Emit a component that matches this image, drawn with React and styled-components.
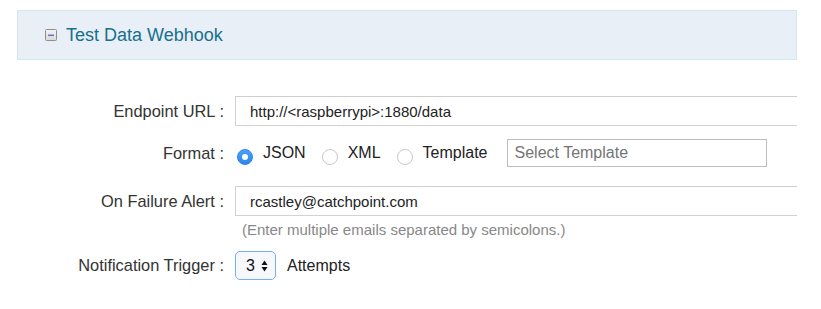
import React from "react";
import styled, { createGlobalStyle } from "styled-components";

const Global = createGlobalStyle`
  html, body { margin: 0; padding: 0; background: #fff; }
  body { font-family: "Liberation Sans", Arial, Helvetica, sans-serif; color: #333; }
`;

const Page = styled.div`
  width: 821px;
  height: 309px;
  box-sizing: border-box;
  padding: 10px 24px 0 17px;
  overflow: hidden;
`;

const Header = styled.div`
  height: 50px;
  box-sizing: border-box;
  background: #e8eff6;
  border: 1px solid #d3e8f3;
  display: flex;
  align-items: center;
  gap: 9px;
  padding-left: 27px;
`;

const Title = styled.span`
  font-size: 18px;
  color: #17708e;
  line-height: 22px;
`;

const Row = styled.div`
  display: grid;
  grid-template-columns: 207px 1fr;
  column-gap: 11px;
  align-items: center;
  height: ${(p) => p.$h}px;
  margin-top: ${(p) => p.$mt}px;
`;

const Label = styled.label`
  text-align: right;
  font-size: 16.4px;
  color: #333;
  white-space: nowrap;
`;

const Field = styled.div`
  display: flex;
  align-items: center;
  height: 100%;
  min-width: 0;
`;

const TextInput = styled.div`
  flex: 1;
  height: 100%;
  box-sizing: border-box;
  border: 1px solid #d2d2d2;
  border-right: none;
  border-top-color: #cfcfcf;
  padding-left: 14px;
  display: flex;
  align-items: center;
  font-size: 15px;
  color: #222;
`;

const Options = styled.div`
  display: flex;
  align-items: center;
  gap: 16px;
  margin-left: 2px;
  flex-shrink: 0;
`;

const Option = styled.span`
  display: flex;
  align-items: center;
  gap: 10px;
  font-size: 16px;
  color: #222;
`;

const Radio = styled.span`
  flex-shrink: 0;
  width: 16px;
  height: 16px;
  box-sizing: border-box;
  border-radius: 50%;
  margin-top: 7px;
  display: flex;
  align-items: center;
  justify-content: center;
  background: ${(p) => (p.$on ? "linear-gradient(#4aa0fa, #2b86ef)" : "#fff")};
  border: 1px solid ${(p) => (p.$on ? "#2b84ea" : "#c9c9c9")};
  &::after {
    content: "";
    display: ${(p) => (p.$on ? "block" : "none")};
    width: 6px;
    height: 6px;
    border-radius: 50%;
    background: #fff;
  }
`;

const SelectBox = styled.div`
  flex-shrink: 0;
  width: 260px;
  height: 28px;
  box-sizing: border-box;
  margin-left: 19px;
  border: 1px solid #bdbdbd;
  padding-left: 7px;
  display: flex;
  align-items: center;
  font-size: 16px;
  color: #757575;
`;

const Help = styled.div`
  margin: 5px 0 0 225px;
  line-height: 18px;
  font-size: 15px;
  color: #888;
`;

const Spinner = styled.div`
  width: 41px;
  height: 29px;
  box-sizing: border-box;
  border: 1px solid #78aef0;
  border-radius: 5px;
  background: #f6f8fb;
  display: flex;
  align-items: center;
  padding-left: 10px;
  gap: 6px;
  font-size: 16px;
  color: #111;
`;

const Unit = styled.span`
  margin-left: 11px;
  font-size: 16px;
  color: #222;
`;

const MinusIcon = () => (
  <svg width="12" height="12" viewBox="0 0 12 12">
    <defs>
      <linearGradient id="mg" x1="0" y1="0" x2="0" y2="1">
        <stop offset="0" stopColor="#f4f4f4" />
        <stop offset="1" stopColor="#d8d8d8" />
      </linearGradient>
    </defs>
    <rect x="0.5" y="0.5" width="11" height="11" rx="1" fill="url(#mg)" stroke="#8f8f8f" />
    <rect x="3" y="5.5" width="6" height="1.6" fill="#6a79c2" />
  </svg>
);

const Arrows = () => (
  <svg width="7" height="12" viewBox="0 0 7 12">
    <path d="M3.5 0.5 L6.5 5 L0.5 5 Z" fill="#111" />
    <path d="M3.5 11.5 L6.5 7 L0.5 7 Z" fill="#111" />
  </svg>
);

export default function App() {
  return (
    <>
      <Global />
      <Page>
        <Header>
          <MinusIcon />
          <Title>Test Data Webhook</Title>
        </Header>

        <Row $h={30} $mt={36}>
          <Label>Endpoint URL :</Label>
          <Field>
            <TextInput>http://&lt;raspberrypi&gt;:1880/data</TextInput>
          </Field>
        </Row>

        <Row $h={28} $mt={13}>
          <Label>Format :</Label>
          <Field>
            <Options>
              <Option><Radio $on />JSON</Option>
              <Option><Radio />XML</Option>
              <Option><Radio />Template</Option>
            </Options>
            <SelectBox>Select Template</SelectBox>
          </Field>
        </Row>

        <Row $h={30} $mt={19}>
          <Label>On Failure Alert :</Label>
          <Field>
            <TextInput>rcastley@catchpoint.com</TextInput>
          </Field>
        </Row>
        <Help>(Enter multiple emails separated by semicolons.)</Help>

        <Row $h={29} $mt={12}>
          <Label>Notification Trigger :</Label>
          <Field>
            <Spinner>3<Arrows /></Spinner>
            <Unit>Attempts</Unit>
          </Field>
        </Row>
      </Page>
    </>
  );
}
